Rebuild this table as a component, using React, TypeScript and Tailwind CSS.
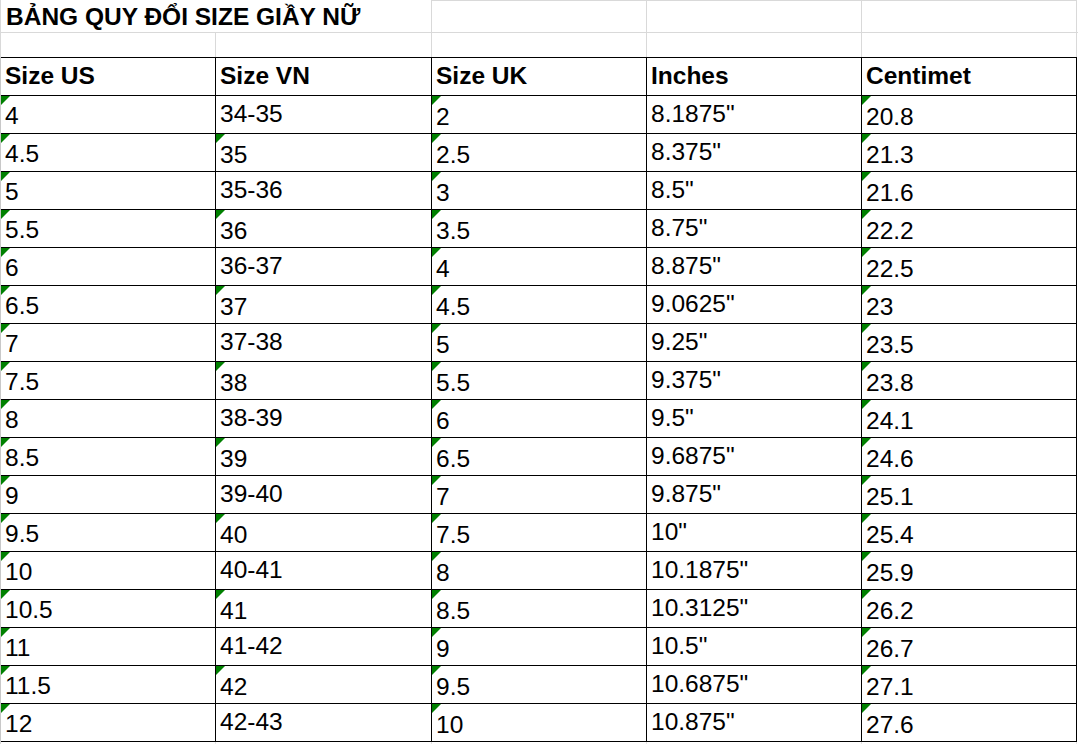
import React from "react";

const us = ["4","4.5","5","5.5","6","6.5","7","7.5","8","8.5","9","9.5","10","10.5","11","11.5","12"];
const vn = ["34-35","35","35-36","36","36-37","37","37-38","38","38-39","39","39-40","40","40-41","41","41-42","42","42-43"];
const uk = ["2","2.5","3","3.5","4","4.5","5","5.5","6","6.5","7","7.5","8","8.5","9","9.5","10"];
const inches = ['8.1875"','8.375"','8.5"','8.75"','8.875"','9.0625"','9.25"','9.375"','9.5"','9.6875"','9.875"','10"','10.1875"','10.3125"','10.5"','10.6875"','10.875"'];
const cm = ["20.8","21.3","21.6","22.2","22.5","23","23.5","23.8","24.1","24.6","25.1","25.4","25.9","26.2","26.7","27.1","27.6"];

function Cell({ text, tri, bold, pb }: { text: string; tri?: boolean; bold?: boolean; pb: string }) {
  return (
    <div className={"relative flex h-[38px] items-end border-r border-b border-black pl-[4px] " + pb}>
      {tri && (
        <div className="absolute left-0 top-0 h-0 w-0 border-t-[9px] border-r-[9px] border-t-[#008000] border-r-transparent" />
      )}
      <span className={"text-[24.5px] leading-none text-black " + (bold ? "font-bold" : "")}>{text}</span>
    </div>
  );
}

export default function App() {
  const headers = ["Size US", "Size VN", "Size UK", "Inches", "Centimet"];
  return (
    <div
      className="h-[744px] w-[1078px] overflow-hidden bg-white text-black"
      style={{ fontFamily: '"Liberation Sans", Arial, sans-serif' }}
    >
      {/* title row */}
      <div className="grid h-[33px] grid-cols-[1px_431px_215px_215px_215px_1px] border-b border-[#d9d9d9]">
        <div className="bg-[#d9d9d9]" />
        <div className="flex items-end border-r border-[#d9d9d9] pb-[3px] pl-[5px]">
          <span className="whitespace-nowrap text-[24.5px] font-bold leading-none">
            BẢNG QUY ĐỔI SIZE GIẦY NỮ
          </span>
        </div>
        <div className="border-t border-r border-[#d9d9d9]" />
        <div className="border-t border-r border-[#d9d9d9]" />
        <div className="border-t border-r border-[#d9d9d9]" />
        <div />
      </div>
      {/* empty row */}
      <div className="grid h-[24px] grid-cols-[1px_215px_216px_215px_215px_215px_1px]">
        <div className="bg-[#d9d9d9]" />
        <div className="border-r border-[#d9d9d9]" />
        <div className="border-r border-[#d9d9d9]" />
        <div className="border-r border-[#d9d9d9]" />
        <div className="border-r border-[#d9d9d9]" />
        <div className="border-r border-[#d9d9d9]" />
        <div />
      </div>
      {/* table */}
      <div className="flex">
        <div className="w-[1px] bg-[#c8c8c8]" />
        <div className="grid w-[1076px] grid-cols-[215px_216px_215px_215px_215px] border-t border-black">
          {headers.map((h) => (
            <Cell key={h} text={h} bold pb="pb-[7px]" />
          ))}
          {us.map((_, i) => {
            const vnTri = !vn[i].includes("-");
            return (
              <React.Fragment key={i}>
                <Cell text={us[i]} tri pb="pb-[5px]" />
                <Cell text={vn[i]} tri={vnTri} pb={vnTri ? "pb-[4px]" : "pb-[7px]"} />
                <Cell text={uk[i]} tri pb="pb-[4px]" />
                <Cell text={inches[i]} pb="pb-[7px]" />
                <Cell text={cm[i]} tri pb="pb-[4px]" />
              </React.Fragment>
            );
          })}
        </div>
      </div>
      <div className="grid h-[4px] grid-cols-[1px_215px_216px_215px_215px_215px_1px]">
        <div className="bg-[#d9d9d9]" />
        <div className="border-r border-[#e6e6e6]" />
        <div className="border-r border-[#e6e6e6]" />
        <div className="border-r border-[#e6e6e6]" />
        <div className="border-r border-[#e6e6e6]" />
        <div className="border-r border-[#e6e6e6]" />
        <div />
      </div>
    </div>
  );
}
